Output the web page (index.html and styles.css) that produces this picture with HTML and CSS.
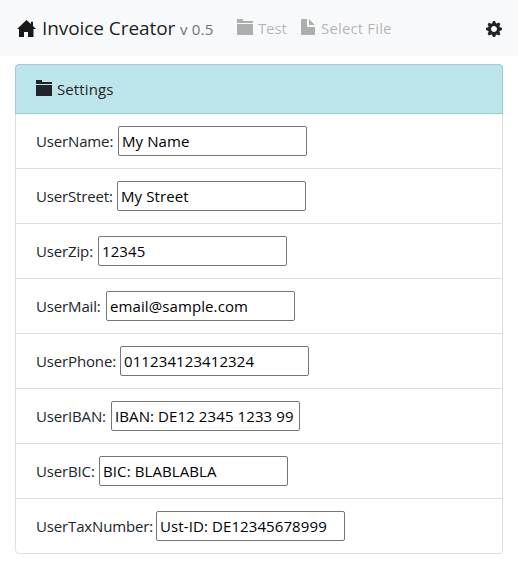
FILE: index.html
```html
<!DOCTYPE html>
<html lang="en">
<head>
<meta charset="utf-8">
<title>Invoice Creator</title>
<link rel="stylesheet" href="styles.css">
</head>
<body>
<nav class="navbar">
  <a class="brand"><svg class="home" viewBox="0 0 19 18"><path d="M9.500 0L0 9h2v8h5v-5h4v5h5.500V9H19l-3-3V1.700h-2v2.400z"/></svg><span class="brand-name">Invoice Creator</span><small class="version">v 0.5</small></a>
  <a class="nav-link test"><svg class="icon" viewBox="0 0 16 16"><path d="M0 0h6v2h10v2H0zM0 5h16v11H0z"/></svg><span>Test</span></a>
  <a class="nav-link file"><svg class="icon" viewBox="0 0 16 16"><path d="M0 0h6v8h8v8H0zM8 0l6 6H8z"/></svg><span>Select File</span></a>
  <a class="gear"><svg class="icon" viewBox="0 0 8 8"><path d="M3.500 0l-.5 1.190-.310.130-1.190-.500-.690.690.5 1.190-.130.310L0 3.500v1l1.190.5.130.310-.5 1.190.690.690 1.190-.5.310.130.500 1.190h1l.5-1.190.310-.130 1.190.5.690-.690-.5-1.190.130-.310L8 4.500v-1l-1.190-.5-.130-.310.5-1.190-.690-.690-1.190.5-.310-.130L4.500 0zM4 2.500c.83 0 1.500.67 1.500 1.500S4.830 5.500 4 5.500 2.500 4.830 2.500 4 3.170 2.500 4 2.500z"/></svg></a>
</nav>
<ul class="list">
  <li class="item heading"><svg class="icon" viewBox="0 0 16 16"><path d="M0 0h6v2h10v2H0zM0 5h16v11H0z"/></svg><span>Settings</span></li>
  <li class="item"><label class="name" for="name">UserName:</label><input id="name" value="My Name"></li>
  <li class="item"><label class="street" for="street">UserStreet:</label><input id="street" value="My Street"></li>
  <li class="item"><label class="zip" for="zip">UserZip:</label><input id="zip" value="12345"></li>
  <li class="item"><label class="mail" for="mail">UserMail:</label><input id="mail" value="email@sample.com"></li>
  <li class="item"><label class="phone" for="phone">UserPhone:</label><input id="phone" value="011234123412324"></li>
  <li class="item"><label class="iban" for="iban">UserIBAN:</label><input id="iban" value="IBAN: DE12 2345 1233 99"></li>
  <li class="item"><label class="bic" for="bic">UserBIC:</label><input id="bic" value="BIC: BLABLABLA"></li>
  <li class="item"><label class="tax" for="tax">UserTaxNumber:</label><input id="tax" value="Ust-ID: DE12345678999"></li>
</ul>
</body>
</html>
```
FILE: styles.css
```css
* { box-sizing: border-box; }
body { margin: 0; background: #fff; color: #212529; font: 15px/24px "Open Sans", sans-serif; letter-spacing: -0.15px; }
svg { display: block; fill: currentColor; flex: none; }
.icon { width: 16px; height: 16px; }
.navbar { display: flex; align-items: center; height: 56px; padding: 0 16px; background: #f8f9fa; white-space: nowrap; }
.brand { display: flex; align-items: baseline; width: 221px; color: rgba(0,0,0,.9); }
.home { width: 19px; height: 18px; align-self: center; margin: 2px 6px 0 1px; }
.brand-name { width: 138px; font-size: 19px; line-height: 30px; letter-spacing: -0.07px; }
.version { color: #6c757d; font-size: 15px; letter-spacing: 0.2px; }
.nav-link { display: flex; gap: 5px; color: rgba(0,0,0,.3); }
.nav-link .icon { margin-top: 3px; }
.test { width: 64px; }
.file { gap: 4px; letter-spacing: 0.15px; }
.gear { margin: 2px 0 0 auto; color: #212529; }
.list { margin: 8px 15px 0; padding: 0; list-style: none; border: 1px solid #dfdfdf; border-radius: 4px; }
.item { display: flex; align-items: center; height: 55px; padding: 0 20px; border-bottom: 1px solid #dfdfdf; }
.item:last-child { height: 54px; border-bottom: 0; }
.heading { height: 50px; margin: -1px -1px 0; padding: 0 20px; gap: 5px; background: #bee5eb; border: 1px solid #9fcdd4; border-radius: 4px 4px 0 0; letter-spacing: 0.1px; }
.heading .icon { margin-bottom: 2px; }
.item label { flex: none; white-space: nowrap; }
input { width: 189px; height: 30px; padding: 1px 3px; border: 1px solid #767676; border-radius: 2px; background: #fff; color: #000; font: inherit; letter-spacing: 0.1px; }
.name { width: 82px; }
.street { width: 81px; }
.zip { width: 62px; }
.mail { width: 70px; }
.phone { width: 84px; }
.iban { width: 75px; }
.bic { width: 63px; }
.tax { width: 120px; }
```
